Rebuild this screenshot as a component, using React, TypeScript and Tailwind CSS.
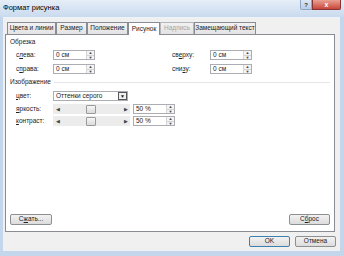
import React from "react";

const font = { fontFamily: '"Liberation Sans", Arial, sans-serif' };

// small helper for accelerator letters
function Acc({ pre, u, post }: { pre: string; u: string; post: string }) {
  return (
    <span>
      {pre}
      <span className="underline underline-offset-[1px]">{u}</span>
      {post}
    </span>
  );
}

function Spinner() {
  return (
    <div className="flex flex-col w-[8px] h-full border-l border-[#d5d5d5] bg-[#f3f3f3]">
      <div className="flex-1 flex items-center justify-center text-[4px] leading-none text-[#444] border-b border-[#d5d5d5]">▲</div>
      <div className="flex-1 flex items-center justify-center text-[4px] leading-none text-[#444]">▼</div>
    </div>
  );
}

function NumInput({ value, w }: { value: string; w: string }) {
  return (
    <div className={`flex h-[10px] ${w} border border-[#abadb3] bg-white`}>
      <div className="flex-1 flex items-center pl-[2px] text-[6.5px] leading-none text-[#222]">{value}</div>
      <Spinner />
    </div>
  );
}

function Btn({ children, w, def }: { children: React.ReactNode; w: string; def?: boolean }) {
  return (
    <div
      className={`flex items-center justify-center h-[11px] ${w} rounded-[2px] border ${
        def ? "border-[#3c7fb1]" : "border-[#8e8f8f]"
      } bg-gradient-to-b from-[#f2f2f2] to-[#dcdcdc] text-[6.5px] leading-none text-[#222]`}
    >
      {children}
    </div>
  );
}

export default function App() {
  const tabs = [
    { label: "Цвета и линии", w: "w-[49px]" },
    { label: "Размер", w: "w-[31px]" },
    { label: "Положение", w: "w-[41px]" },
    { label: "Рисунок", w: "w-[32px]", active: true },
    { label: "Надпись", w: "w-[34px]", disabled: true },
    { label: "Замещающий текст", w: "w-[62px]" },
  ];

  return (
    <div
      className="w-[344px] h-[256px] flex flex-col bg-[#c3d6ec] overflow-hidden"
      style={font}
    >
      {/* title bar */}
      <div className="h-[17px] flex items-start bg-gradient-to-b from-[#e6eef8] to-[#c9daee]">
        <div className="pl-[3px] pt-[4px] text-[7.5px] leading-none text-black">Формат рисунка</div>
        <div className="ml-auto flex mr-[3px]">
          <div className="w-[12px] h-[10px] flex items-center justify-center rounded-bl-[2px] border border-[#8ea6c4] border-t-0 bg-gradient-to-b from-[#dde7f3] to-[#b9cde6] text-[6px] leading-none text-[#333] font-bold">
            ?
          </div>
          <div className="w-[29px] h-[10px] flex items-center justify-center rounded-br-[2px] border border-[#8a3535] border-t-0 bg-gradient-to-b from-[#e8a092] to-[#c7443a] text-[7px] leading-none text-white font-bold">
            x
          </div>
        </div>
      </div>

      {/* client area */}
      <div className="flex-1 flex flex-col ml-[3px] mr-[4px] mb-[5px] bg-[#f0f0f0] border-t border-[#eef3f9]">
        {/* tabs */}
        <div className="flex items-end pl-[4px] pt-[3px] h-[16px]">
          {tabs.map((t) => (
            <div
              key={t.label}
              className={`${t.w} flex items-center justify-center border border-b-0 text-[6.5px] leading-none ${
                t.active
                  ? "h-[13px] bg-white border-[#898c95] text-[#222] relative top-[1px] z-10"
                  : t.disabled
                  ? "h-[12px] bg-gradient-to-b from-[#f2f2f2] to-[#e3e3e3] border-[#b5b7bd] text-[#a6a6a6]"
                  : "h-[12px] bg-gradient-to-b from-[#f2f2f2] to-[#e3e3e3] border-[#898c95] text-[#222]"
              }`}
            >
              {t.label}
            </div>
          ))}
        </div>

        {/* tab panel */}
        <div className="h-[198px] ml-[2px] mr-[5px] bg-white border border-[#898c95] flex flex-col text-[6.5px] leading-none text-[#222]">
          {/* Обрезка */}
          <div className="mt-[2px] h-[10px] flex items-center pl-[4px] pr-[4px]">
            <span>Обрезка</span>
          </div>
          <div className="mt-[3px] flex items-center pl-[10px]">
            <div className="w-[37px]"><Acc pre="с" u="л" post="ева:" /></div>
            <NumInput value="0 см" w="w-[42px]" />
            <div className="ml-[77px] w-[38px]"><Acc pre="св" u="е" post="рху:" /></div>
            <NumInput value="0 см" w="w-[42px]" />
          </div>
          <div className="mt-[4px] flex items-center pl-[10px]">
            <div className="w-[37px]"><Acc pre="с" u="п" post="рава:" /></div>
            <NumInput value="0 см" w="w-[42px]" />
            <div className="ml-[77px] w-[38px]"><Acc pre="сни" u="з" post="у:" /></div>
            <NumInput value="0 см" w="w-[42px]" />
          </div>

          {/* Изображение */}
          <div className="mt-[3px] h-[10px] flex items-center pl-[4px] pr-[4px] gap-[3px]">
            <span>Изображение</span>
            <div className="flex-1 h-px bg-[#e4e4e4]" />
          </div>
          <div className="mt-[4px] flex items-center pl-[10px]">
            <div className="w-[37px]"><Acc pre="" u="ц" post="вет:" /></div>
            <div className="flex h-[10px] w-[75px] border border-[#abadb3] bg-white">
              <div className="flex-1 flex items-center pl-[2px]">Оттенки серого</div>
              <div className="w-[9px] flex items-center justify-center border border-[#555] bg-[#f0f0f0] text-[5px] leading-none">▼</div>
            </div>
          </div>
          {[
            { pre: "", u: "я", post: "ркость:" },
            { pre: "", u: "к", post: "онтраст:" },
          ].map((r, i) => (
            <div key={i} className={`${i === 0 ? "mt-[3px]" : "mt-[2px]"} flex items-center pl-[10px]`}>
              <div className="w-[37px]"><Acc pre={r.pre} u={r.u} post={r.post} /></div>
              <div className="flex items-center h-[10px] w-[77px] bg-[#ececec]">
                <div className="w-[9px] flex items-center justify-center text-[5px] text-[#444]">◀</div>
                <div className="w-[24px]" />
                <div className="w-[10px] h-[9px] border border-[#9a9a9a] rounded-[1px] bg-gradient-to-b from-[#f6f6f6] to-[#dadada]" />
                <div className="flex-1" />
                <div className="w-[9px] flex items-center justify-center text-[5px] text-[#444]">▶</div>
              </div>
              <div className="ml-[3px]">
                <NumInput value="50 %" w="w-[42px]" />
              </div>
            </div>
          ))}

          <div className="flex-1" />
          <div className="flex items-center justify-between pl-[4px] pr-[4px] mb-[6px]">
            <Btn w="w-[42px]"><Acc pre="С" u="ж" post="ать..." /></Btn>
            <Btn w="w-[41px]"><Acc pre="С" u="б" post="рос" /></Btn>
          </div>
        </div>

        {/* footer */}
        <div className="flex-1 flex items-center justify-end gap-[5px] pr-[4px]">
          <Btn w="w-[41px]" def>OK</Btn>
          <Btn w="w-[41px]">Отмена</Btn>
        </div>
      </div>
    </div>
  );
}
